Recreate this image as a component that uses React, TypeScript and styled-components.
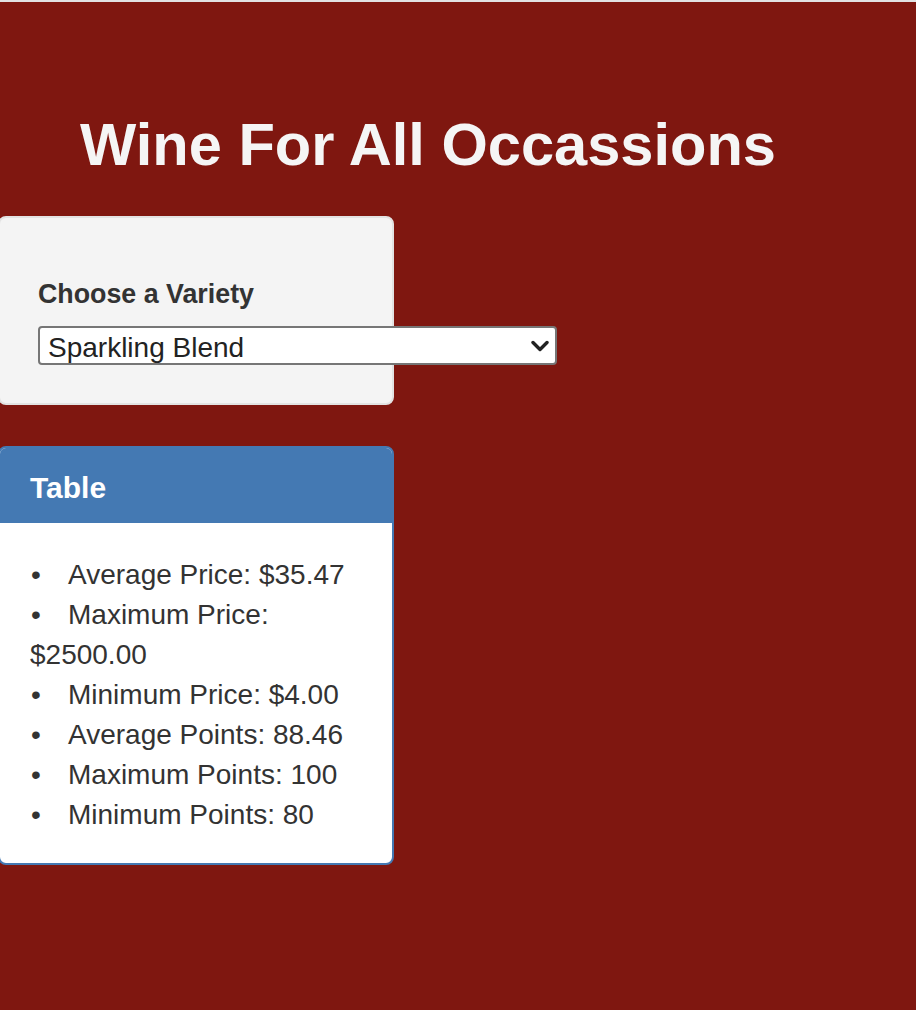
import React from "react";
import styled, { createGlobalStyle } from "styled-components";

const GlobalStyle = createGlobalStyle`
  html, body {
    margin: 0;
    padding: 0;
    background: #7f1710;
  }
  body {
    font-family: "Liberation Sans", Arial, Helvetica, sans-serif;
    color: #333333;
    overflow-x: hidden;
  }
`;

const Page = styled.div`
  min-height: 1008px;
  border-top: 2px solid #e2e2e2;
  background: #7f1710;
`;

const Title = styled.h2`
  margin: 110px 0 38px 0;
  padding-left: 80px;
  font-size: 59.6px;
  line-height: 66px;
  font-weight: 700;
  color: #f5f5f5;
`;

const Well = styled.div`
  box-sizing: border-box;
  width: 396px;
  margin-left: -2px;
  padding: 56px 38px 38px 38px;
  background: #f4f4f4;
  border: 2px solid #e3e3e3;
  border-radius: 8px;
  overflow: visible;
`;

const Label = styled.label`
  display: block;
  font-size: 26.8px;
  line-height: 40px;
  font-weight: 700;
  color: #333333;
  margin-bottom: 12px;
`;

const SelectWrap = styled.div`
  position: relative;
  width: 519px;
  height: 39px;
`;

const Select = styled.select`
  appearance: none;
  -webkit-appearance: none;
  box-sizing: border-box;
  width: 100%;
  height: 100%;
  margin: 0;
  padding: 3px 40px 0 8px;
  font-family: "Liberation Sans", Arial, Helvetica, sans-serif;
  font-size: 28px;
  color: #222222;
  background: #ffffff;
  border: 2px solid #767676;
  border-radius: 4px;
  outline: none;
`;

const Chevron = styled.svg`
  position: absolute;
  right: 8px;
  top: 13px;
  width: 18px;
  height: 14px;
  pointer-events: none;
`;

const Panel = styled.div`
  box-sizing: border-box;
  width: 396px;
  margin-left: -2px;
  margin-top: 41px;
  border: 2px solid #4479b3;
  border-radius: 8px;
  background: #ffffff;
  overflow: hidden;
`;

const PanelHeading = styled.div`
  background: #4479b3;
  padding: 22px 30px 17px 30px;
`;

const PanelTitle = styled.h3`
  margin: 0;
  font-size: 30px;
  line-height: 36px;
  font-weight: 700;
  color: #ffffff;
`;

const PanelBody = styled.div`
  padding: 32px 30px 28px 30px;
`;

const StatList = styled.ul`
  list-style: none;
  margin: 0;
  padding: 0;
`;

const StatItem = styled.li`
  font-size: 28px;
  line-height: 40px;
  color: #333333;

  &::before {
    content: "•";
    display: inline-block;
    width: 38px;
    padding-left: 1px;
    box-sizing: border-box;
  }
`;

const stats = [
  "Average Price: $35.47",
  "Maximum Price: $2500.00",
  "Minimum Price: $4.00",
  "Average Points: 88.46",
  "Maximum Points: 100",
  "Minimum Points: 80",
];

export default function App() {
  return (
    <>
      <GlobalStyle />
      <Page>
        <Title>Wine For All Occassions</Title>
        <Well>
          <Label htmlFor="variety">Choose a Variety</Label>
          <SelectWrap>
            <Select id="variety" defaultValue="Sparkling Blend">
              <option>Sparkling Blend</option>
              <option>Red Blend</option>
              <option>Chardonnay</option>
              <option>Pinot Noir</option>
            </Select>
            <Chevron viewBox="0 0 18 14">
              <path
                d="M2 3.5 L9 10.5 L16 3.5"
                fill="none"
                stroke="#222222"
                strokeWidth="3.4"
                strokeLinecap="round"
                strokeLinejoin="round"
              />
            </Chevron>
          </SelectWrap>
        </Well>
        <Panel>
          <PanelHeading>
            <PanelTitle>Table</PanelTitle>
          </PanelHeading>
          <PanelBody>
            <StatList>
              {stats.map((s) => (
                <StatItem key={s}>{s}</StatItem>
              ))}
            </StatList>
          </PanelBody>
        </Panel>
      </Page>
    </>
  );
}
